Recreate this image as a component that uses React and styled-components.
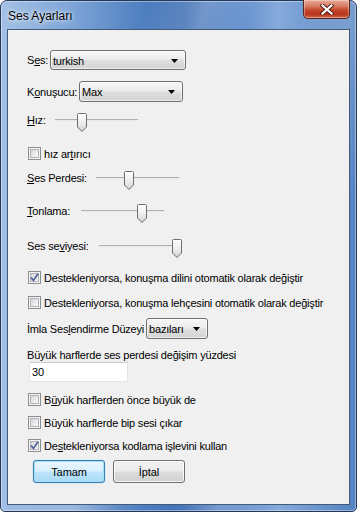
import React from 'react'
import styled, { createGlobalStyle } from 'styled-components'

const GlobalStyle = createGlobalStyle`
    html, body {
        margin: 0;
        padding: 0;
        background: #ffffff;
    }
    body {
        font-family: "Liberation Sans", Arial, sans-serif;
    }
`;

const Window = styled.div`
    width: 357px;
    height: 512px;
    box-sizing: border-box;
    display: flex;
    flex-direction: column;
    border: 1px solid #22395a;
    border-radius: 7px 7px 5px 5px;
    padding: 0 6px 6px 6px;
    background:
        linear-gradient(105deg, rgba(255,255,255,0) 30%, rgba(255,255,255,0.22) 42%, rgba(255,255,255,0) 52%, rgba(255,255,255,0) 62%, rgba(255,255,255,0.2) 72%, rgba(255,255,255,0) 82%),
        linear-gradient(to right, #a3c0e5 0%, #82a8d9 18%, #4f7fc0 40%, #3f6fb4 52%, #5f8ccb 66%, #86aadb 78%, #6a94cd 90%, #5583c2 100%);
    box-shadow: inset 0 0 0 1px rgba(255,255,255,0.4);
`;

const TitleBar = styled.div`
    height: 28px;
    display: flex;
    justify-content: space-between;
    align-items: center;
`;

const Title = styled.span`
    padding-left: 1px;
    padding-top: 2px;
    font-family: "Liberation Sans", Arial, sans-serif;
    font-size: 12px;
    color: #000;
    text-shadow: 0 0 6px rgba(255,255,255,0.9), 0 0 3px rgba(255,255,255,0.8);
`;

const CloseButton = styled.div`
    align-self: flex-start;
    margin-top: -1px;
    width: 47px;
    height: 19px;
    box-sizing: border-box;
    border: 1px solid #5c2418;
    border-top: none;
    border-radius: 0 0 5px 5px;
    background: linear-gradient(to bottom, #e9a996 0%, #d67c64 35%, #c4472b 55%, #b8361c 80%, #cf6a4d 100%);
    box-shadow: inset 0 0 0 1px rgba(255,255,255,0.35);
    display: flex;
    align-items: center;
    justify-content: center;
`;

const Client = styled.div`
    flex: 1;
    background: #f0f0f0;
    border: 1px solid #435a78;
    padding: 20px 0 0 19px;
    display: flex;
    flex-direction: column;
    font-size: 11px;
    color: #000;
`;

const Row = styled.div`
    display: flex;
    align-items: center;
    height: ${p => p.$h}px;
    margin-top: ${p => p.$mt || 0}px;
`;

const Label = styled.span`
    width: ${p => (p.$w ? `${p.$w}px` : 'auto')};
    flex-shrink: 0;
    white-space: nowrap;
    letter-spacing: -0.2px;
`;

const U = styled.span`
    text-decoration: underline;
`;

const Combo = styled.div`
    width: ${p => p.$w}px;
    height: ${p => p.$h}px;
    margin-left: ${p => p.$ml || 0}px;
    box-sizing: border-box;
    border: 1px solid #707070;
    border-radius: 3px;
    background: linear-gradient(to bottom, #f6f6f6 0%, #ececec 45%, #dedede 55%, #d3d3d3 100%);
    box-shadow: inset 0 0 0 1px rgba(255,255,255,0.6);
    display: flex;
    align-items: center;
    justify-content: space-between;
    padding: 1px 7px 0 2px;
    letter-spacing: -0.2px;
`;

const SliderBox = styled.div`
    position: relative;
    width: ${p => p.$w}px;
    height: 16px;
`;

const Track = styled.div`
    position: absolute;
    left: 0;
    right: 0;
    top: 7px;
    height: 1px;
    background: #b0b0b0;
    border-bottom: 1px solid #e8e8e8;
`;

const Thumb = styled.svg`
    position: absolute;
    top: 1px;
    width: 10px;
    height: 20px;
`;

const CheckRow = styled.label`
    display: flex;
    align-items: center;
    height: 15px;
    margin-top: ${p => p.$mt || 0}px;
    margin-left: 1px;
    letter-spacing: -0.2px;
    white-space: nowrap;
`;

const Box = styled.span`
    width: 13px;
    height: 13px;
    box-sizing: border-box;
    border: 1px solid #8e8f8f;
    background: #f4f4f4;
    margin-right: 3px;
    position: relative;
    flex-shrink: 0;

    &::before {
        content: '';
        position: absolute;
        left: 1px;
        top: 1px;
        width: 9px;
        height: 9px;
        box-sizing: border-box;
        border: 1px solid #b0b4ba;
        background: linear-gradient(135deg, #d4d6da 0%, #ececec 60%, #fbfbfb 100%);
    }

    svg {
        position: absolute;
        left: 1px;
        top: 1px;
    }
`;

const TextBox = styled.div`
    width: 99px;
    height: 20px;
    box-sizing: border-box;
    margin-left: 2px;
    background: #fff;
    border: 1px solid #dfe4ea;
    border-top-color: #c8ccd2;
    display: flex;
    align-items: center;
    padding-left: 2px;
`;

const ButtonRow = styled.div`
    display: flex;
    gap: 8px;
    margin-top: 7px;
    margin-left: 6px;
`;

const Button = styled.div`
    width: 72px;
    height: 23px;
    box-sizing: border-box;
    border-radius: 3px;
    display: flex;
    align-items: center;
    justify-content: center;
    letter-spacing: -0.1px;
    border: 1px solid ${p => (p.$primary ? '#3c7fb1' : '#707070')};
    background: ${p => (p.$primary
        ? 'linear-gradient(to bottom, #eaf6fd 0%, #d9f0fc 48%, #bee6fd 52%, #a7d9f5 100%)'
        : 'linear-gradient(to bottom, #f2f2f2 0%, #ebebeb 48%, #dddddd 52%, #cfcfcf 100%)')};
    box-shadow: ${p => (p.$primary
        ? 'inset 0 0 0 1px #9fe0fc, 0 0 1px #49b3f0'
        : 'inset 0 0 0 1px rgba(255,255,255,0.8)')};
`;

function Arrow() {
    return (
        <svg width="7" height="4" viewBox="0 0 7 4">
            <polygon points="0,0 7,0 3.5,4" fill="#000" />
        </svg>
    )
}

function Check() {
    return (
        <svg width="9" height="9" viewBox="0 0 9 9">
            <path d="M1 4.5 L3.5 7.5 L8 0.8" fill="none" stroke="#4b5e93" strokeWidth="1.6" />
        </svg>
    )
}

function Slider({ width, value }) {
    const left = Math.round(value * width) - 5
    return (
        <SliderBox $w={width}>
            <Track />
            <Thumb style={{ left }} viewBox="0 0 10 20">
                <defs>
                    <linearGradient id="thumbFill" x1="0" y1="0" x2="0" y2="1">
                        <stop offset="0" stopColor="#ffffff" />
                        <stop offset="0.6" stopColor="#eaeaea" />
                        <stop offset="1" stopColor="#cfcfcf" />
                    </linearGradient>
                </defs>
                <path d="M1.5 0.5 H8.5 Q9.5 0.5 9.5 1.5 V14 L5 18.5 L0.5 14 V1.5 Q0.5 0.5 1.5 0.5 Z" fill="url(#thumbFill)" stroke="#6f6f6f" strokeWidth="1" />
            </Thumb>
        </SliderBox>
    )
}

function CheckBox({ checked, children, mt }) {
    return (
        <CheckRow $mt={mt}>
            <Box>{checked && <Check />}</Box>
            {children}
        </CheckRow>
    )
}

export default function App() {
    return (
        <>
            <GlobalStyle />
            <Window>
                <TitleBar>
                    <Title>Ses Ayarları</Title>
                    <CloseButton>
                        <svg width="14" height="11" viewBox="0 0 14 11">
                            <path d="M2.5 1.5 L11.5 9.5 M11.5 1.5 L2.5 9.5" stroke="#4a1a10" strokeWidth="4" strokeLinecap="square" />
                            <path d="M2.5 1.5 L11.5 9.5 M11.5 1.5 L2.5 9.5" stroke="#ffffff" strokeWidth="2.2" strokeLinecap="square" />
                        </svg>
                    </CloseButton>
                </TitleBar>
                <Client>
                    <Row $h={20}>
                        <Label $w={23}>S<U>e</U>s:</Label>
                        <Combo $w={136} $h={20}>turkish<Arrow /></Combo>
                    </Row>
                    <Row $h={21} $mt={11}>
                        <Label $w={52}>K<U>o</U>nuşucu:</Label>
                        <Combo $w={104} $h={21}>Max<Arrow /></Combo>
                    </Row>
                    <Row $h={16} $mt={10}>
                        <Label $w={28}><U>H</U>ız:</Label>
                        <Slider width={83} value={0.33} />
                    </Row>
                    <CheckBox mt={18}>hız ar<U>t</U>ırıcı</CheckBox>
                    <Row $h={16} $mt={9}>
                        <Label $w={69}><U>S</U>es Perdesi:</Label>
                        <Slider width={83} value={0.4} />
                    </Row>
                    <Row $h={16} $mt={17}>
                        <Label $w={54}><U>T</U>onlama:</Label>
                        <Slider width={83} value={0.73} />
                    </Row>
                    <Row $h={16} $mt={19}>
                        <Label $w={72}>Ses se<U>v</U>iyesi:</Label>
                        <Slider width={83} value={0.94} />
                    </Row>
                    <CheckBox checked mt={16}>Destekleniyorsa, konuşma dilini otomatik olarak değiştir</CheckBox>
                    <CheckBox mt={10}>Destekleniyorsa, konuşma lehçesini otomatik olarak değiştir</CheckBox>
                    <Row $h={21} $mt={8}>
                        <Label>İmla Ses<U>l</U>endirme Düzeyi</Label>
                        <Combo $w={62} $h={21} $ml={2}>bazıları<Arrow /></Combo>
                    </Row>
                    <Row $h={14} $mt={9}>
                        <Label>Büyük harflerde ses perdesi değişim yüzdesi</Label>
                    </Row>
                    <TextBox>30</TextBox>
                    <CheckBox mt={10}>B<U>ü</U>yük harflerden önce büyük de</CheckBox>
                    <CheckBox mt={8}>Büyük harflerde bip sesi çıkar</CheckBox>
                    <CheckBox checked mt={8}>De<U>s</U>tekleniyorsa kodlama işlevini kullan</CheckBox>
                    <ButtonRow>
                        <Button $primary>Tamam</Button>
                        <Button>İptal</Button>
                    </ButtonRow>
                </Client>
            </Window>
        </>
    )
}
